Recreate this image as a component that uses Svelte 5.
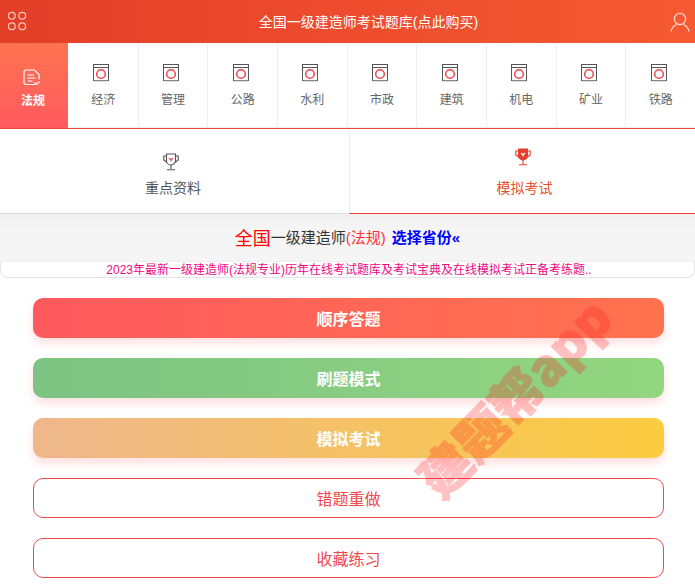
<script>
  const subjects = ['经济', '管理', '公路', '水利', '市政', '建筑', '机电', '矿业', '铁路'];
  const solid = [
    { label: '顺序答题', cls: 'red' },
    { label: '刷题模式', cls: 'green' },
    { label: '模拟考试', cls: 'amber' }
  ];
  const outline = ['错题重做', '收藏练习'];
</script>

<div class="page">
  <header class="top">
    <svg class="grid-icon" width="20" height="20" viewBox="0 0 20 20" fill="none" stroke="#f7c9bd" stroke-width="1.2">
      <circle cx="4.8" cy="4.8" r="3.4" />
      <circle cx="15.2" cy="4.8" r="3.4" />
      <circle cx="4.8" cy="15.2" r="3.4" />
      <circle cx="15.2" cy="15.2" r="3.4" />
    </svg>
    <span class="top-title">全国一级建造师考试题库(点此购买)</span>
    <svg class="user-icon" width="20" height="20" viewBox="0 0 20 20" fill="none" stroke="#fbd8cd" stroke-width="1.2">
      <circle cx="10" cy="7" r="5.6" />
      <path d="M1 19.5c.6-3.6 3.4-6 5.6-7M19 19.5c-.6-3.6-3.4-6-5.6-7" />
    </svg>
  </header>

  <nav class="subjects">
    <div class="subject active">
      <svg class="shifted" width="17" height="17" viewBox="0 0 17 17" fill="none" stroke="#fff" stroke-width="1.2">
        <path d="M3 1h8.5l4.5 4.5v5M12 15.5H3A2 2 0 0 1 1 13.5V3a2 2 0 0 1 2-2" />
        <path d="M4.5 6h6.5M4.5 9h8M4.5 12h5" />
        <path d="M11.5 13.5l2 2 3-3" />
      </svg>
      <span>法规</span>
    </div>
    {#each subjects as name}
      <div class="subject">
        <svg class="shifted" width="16" height="18" viewBox="0 0 16 18" fill="none">
          <rect x="0.5" y="0.5" width="15" height="16" fill="#fff" stroke="#555" />
          <path d="M1 3.5h14" stroke="#555" />
          <path d="M1 16.5h14v1H1z" fill="#bbb" />
          <circle cx="8" cy="10" r="4.3" stroke="#f0454a" stroke-width="1.5" />
        </svg>
        <span>{name}</span>
      </div>
    {/each}
  </nav>

  <section class="tabs">
    <div class="tab">
      <svg class="shifted" width="16" height="18" viewBox="0 0 16 18" fill="none" stroke="#555" stroke-width="1.1">
        <path d="M3.5 1h9v6.5a4.5 4.5 0 0 1-9 0z" />
        <path d="M3.5 3H.8v4l2.9 2.2M12.5 3h2.7v4l-2.9 2.2" />
        <path d="M8 12v4M4 16.7h8" />
        <path d="M6 5l2 2 2-2M8 7v1.5" stroke="#f0454a" />
      </svg>
      <span>重点资料</span>
    </div>
    <div class="tab current">
      <svg class="shifted" width="16" height="18" viewBox="0 0 16 18" fill="none" stroke="#e5402d" stroke-width="1.1">
        <path d="M3.5 1h9v6.5a4.5 4.5 0 0 1-9 0z" fill="#e5402d" />
        <path d="M3.5 3H.8v4l2.9 2.2M12.5 3h2.7v4l-2.9 2.2" />
        <path d="M8 12v4M4 16.7h8" />
        <path d="M6 5l2 2 2-2M8 7v1.5" stroke="#fff" />
      </svg>
      <span>模拟考试</span>
    </div>
  </section>

  <section class="heading">
    <span class="nation">全国</span><span class="level">一级建造师</span><span class="subject-tag">(法规)</span>
    <b class="province">选择省份«</b>
  </section>

  <p class="notice">2023年最新一级建造师(法规专业)历年在线考试题库及考试宝典及在线模拟考试正备考练题..</p>

  <section class="actions">
    {#each solid as btn}
      <div class="btn {btn.cls}">{btn.label}</div>
    {/each}
    {#each outline as label}
      <div class="btn line">{label}</div>
    {/each}
  </section>

  <div class="watermark">建题帮app</div>
</div>

<style>
  :global(body) {
    margin: 0;
    background: #fff;
  }

  .page {
    position: relative;
    width: 695px;
    height: 584px;
    overflow: hidden;
    font-family: "Liberation Sans", "Noto Sans CJK SC", sans-serif;
  }

  .top {
    height: 43px;
    display: flex;
    align-items: center;
    justify-content: space-between;
    padding: 0 5px 0 7px;
    background: linear-gradient(90deg, #e33e28, #f65a32);
  }

  .grid-icon {
    margin-top: -1px;
  }

  .top-title {
    color: #fff;
    font-size: 14px;
    margin-left: 40px;
    margin-top: -1px;
  }

  .user-icon {
    margin-top: 1px;
  }

  .shifted {
    margin-right: 4px;
  }

  .subjects {
    display: flex;
    height: 85px;
    border-bottom: 1px solid #ee4a3f;
  }

  .subject {
    flex: 1;
    display: flex;
    flex-direction: column;
    align-items: center;
    padding-top: 21px;
    gap: 9px;
    border-right: 1px solid #eee;
    border-bottom: 1px solid #eee;
    box-sizing: border-box;
    font-size: 12px;
    line-height: 18px;
    color: #666;
  }

  .subject:last-child {
    border-right: none;
  }

  .subject.active {
    flex: none;
    width: 68px;
    margin-right: 1px;
    padding: 26px 2px 0 0;
    gap: 6px;
    color: #fff;
    font-weight: bold;
    border: none;
    background: linear-gradient(180deg, #ff7350, #ff5a5f);
  }

  .tabs {
    display: flex;
    height: 85px;
  }

  .tab {
    flex: 1;
    display: flex;
    flex-direction: column;
    align-items: center;
    box-sizing: border-box;
    padding: 24px 3px 0 0;
    gap: 8px;
    font-size: 14px;
    line-height: 18px;
    color: #555;
    border-bottom: 1px solid #ddd;
  }

  .tab.current {
    flex: none;
    width: 346px;
    padding: 19px 0 0 4px;
    gap: 13px;
    color: #e5502f;
    border-left: 1px solid #eee;
    border-bottom: 1px solid #ee3a30;
  }

  .heading {
    height: 47px;
    padding-bottom: 2px;
    box-sizing: border-box;
    display: flex;
    align-items: center;
    justify-content: center;
    background: linear-gradient(180deg, #f0f0f0, #f5f5f5 30%);
    font-size: 15px;
    color: #333;
  }

  .nation {
    font-size: 18px;
    color: #f00;
  }

  .subject-tag {
    color: #f33;
  }

  .province {
    margin-left: 6px;
    color: #00f;
  }

  .notice {
    margin: 0;
    height: 17px;
    padding-left: 3px;
    box-sizing: border-box;
    line-height: 17px;
    font-size: 12px;
    text-align: center;
    color: #f0077f;
    border: 1px solid #e4e4e4;
    border-top-color: #eee;
    border-radius: 0 0 8px 8px;
    white-space: nowrap;
  }

  .actions {
    display: flex;
    flex-direction: column;
    gap: 20px;
    padding: 20px 31px 0 33px;
  }

  .btn {
    height: 40px;
    padding-bottom: 1px;
    box-sizing: border-box;
    display: flex;
    align-items: center;
    justify-content: center;
    border-radius: 10px;
    font-size: 16px;
    color: #fff;
    font-weight: bold;
    box-shadow: 0 5px 10px rgba(255, 90, 90, 0.2);
  }

  .red {
    background: linear-gradient(90deg, #ff5a5f, #ff724e);
  }

  .green {
    background: linear-gradient(90deg, #7dc383, #93d680);
  }

  .amber {
    background: linear-gradient(90deg, #eeb78c, #fbcc3f);
  }

  .line {
    background: #fff;
    border: 1px solid #f04a4e;
    color: #f04a4e;
    font-weight: normal;
    box-shadow: none;
  }

  .watermark {
    position: absolute;
    left: 383px;
    top: 361px;
    width: 260px;
    text-align: center;
    transform: rotate(-46deg);
    font-size: 51px;
    line-height: 70px;
    font-weight: 900;
    white-space: nowrap;
    color: #ff1e1e;
    opacity: 0.27;
    -webkit-text-stroke: 1px #ff1e1e;
    font-family: "Noto Sans CJK SC", sans-serif;
    pointer-events: none;
  }
</style>
